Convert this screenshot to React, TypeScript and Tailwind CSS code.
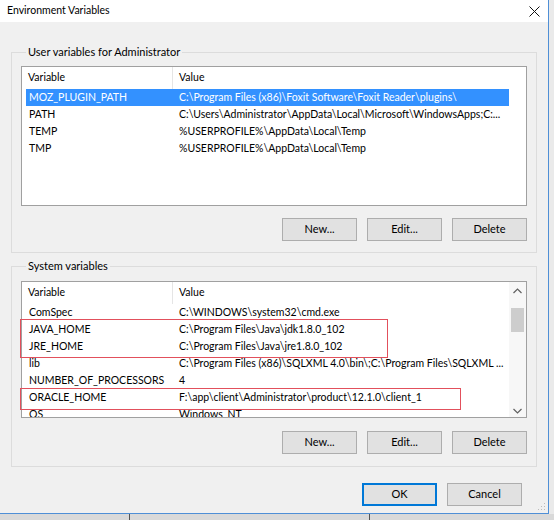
import type { ReactNode } from "react";

type Row = [string, string];

const userVars: Row[] = [
  ["MOZ_PLUGIN_PATH", "C:\\Program Files (x86)\\Foxit Software\\Foxit Reader\\plugins\\"],
  ["PATH", "C:\\Users\\Administrator\\AppData\\Local\\Microsoft\\WindowsApps;C:..."],
  ["TEMP", "%USERPROFILE%\\AppData\\Local\\Temp"],
  ["TMP", "%USERPROFILE%\\AppData\\Local\\Temp"],
];

const systemVars: Row[] = [
  ["ComSpec", "C:\\WINDOWS\\system32\\cmd.exe"],
  ["JAVA_HOME", "C:\\Program Files\\Java\\jdk1.8.0_102"],
  ["JRE_HOME", "C:\\Program Files\\Java\\jre1.8.0_102"],
  ["lib", "C:\\Program Files (x86)\\SQLXML 4.0\\bin\\;C:\\Program Files\\SQLXML ..."],
  ["NUMBER_OF_PROCESSORS", "4"],
  ["ORACLE_HOME", "F:\\app\\client\\Administrator\\product\\12.1.0\\client_1"],
  ["OS", "Windows_NT"],
];

function Button({ label, primary }: { label: string; primary?: boolean }) {
  return (
    <button
      type="button"
      className={
        "h-[23px] w-[75px] shrink-0 bg-[#e1e1e1] text-[11px] text-black " +
        (primary
          ? "border border-[#0078d7] shadow-[inset_0_0_0_1px_#0078d7]"
          : "border border-[#adadad]")
      }
    >
      {label}
    </button>
  );
}

function VarList({
  rows,
  selected,
  height,
  scrollbar,
  children,
}: {
  rows: Row[];
  selected?: number;
  height: string;
  scrollbar?: boolean;
  children?: ReactNode;
}) {
  return (
    <div className={"relative flex border border-[#a0a0a0] bg-white " + height}>
      <div className="min-w-0 flex-1 overflow-hidden pl-[4px]">
        <div className="flex h-[22px] items-center">
          <div className="w-[146px] shrink-0 pl-[2px]">Variable</div>
          <div className="h-full w-px shrink-0 bg-[#e5e5e5]" />
          <div className="pl-[6px]">Value</div>
        </div>
        {rows.map(([name, value], i) => (
          <div
            key={name}
            className={
              "flex h-[17px] w-[483px] items-center whitespace-nowrap " +
              (i === selected ? "bg-[#3391ff] text-white" : "")
            }
          >
            <div className="w-[146px] shrink-0 pl-[3px]">{name}</div>
            <div className="shrink-0 pl-[7px]">{value}</div>
          </div>
        ))}
      </div>
      {scrollbar && (
        <div className="flex w-[17px] shrink-0 flex-col items-center bg-[#f7f7f7] pt-[4px] pb-[3px]">
          <svg width="9" height="6" viewBox="0 0 9 6" className="mt-[2px]">
            <path d="M0.5 5 L4.5 1 L8.5 5" fill="none" stroke="#606060" strokeWidth="1.2" />
          </svg>
          <div className="mt-[14px] h-[24px] w-[13px] bg-[#cdcdcd]" />
          <div className="flex-1" />
          <svg width="9" height="6" viewBox="0 0 9 6">
            <path d="M0.5 1 L4.5 5 L8.5 1" fill="none" stroke="#606060" strokeWidth="1.2" />
          </svg>
        </div>
      )}
      {children}
    </div>
  );
}

function GroupBox({ title, children, className }: { title: string; children: ReactNode; className?: string }) {
  return (
    <fieldset className={"border border-[#dcdcdc] px-[9px] " + (className ?? "")}>
      <legend className="ml-[5px] px-[2px] text-[11px] leading-[16px]">{title}</legend>
      {children}
    </fieldset>
  );
}

export default function App() {
  return (
    <div
      className="relative h-[520px] w-[554px] overflow-hidden bg-[#d9d9d9] text-[10.5px] text-black"
      style={{ fontFamily: 'Lato, "Noto Sans", sans-serif' }}
    >
      <div className="flex h-[514px]">
        <div className="flex w-[549px] flex-col border-r border-b border-[#4f8fd6]">
          {/* title bar */}
          <div className="flex h-[22px] items-center justify-between bg-white pl-[7px] pr-[8px]">
            <span className="text-[10.5px]">Environment Variables</span>
            <svg width="11" height="11" viewBox="0 0 11 11">
              <path d="M0.5 0.5 L10.5 10.5 M10.5 0.5 L0.5 10.5" stroke="#111" strokeWidth="1" />
            </svg>
          </div>

          <div className="relative flex flex-1 flex-col bg-[#f0f0f0] pl-[11px] pr-[11px]">
            <GroupBox title="User variables for Administrator" className="mt-[22px] pt-[6px] pb-[11px]">
              <VarList rows={userVars} selected={0} height="h-[140px]" />
              <div className="mt-[12px] flex justify-end gap-[10px]">
                <Button label="New..." />
                <Button label="Edit..." />
                <Button label="Delete" />
              </div>
            </GroupBox>

            <GroupBox title="System variables" className="mt-[5px] pt-[7px] pb-[12px]">
              <VarList rows={systemVars} height="h-[137px]" scrollbar>
                <div className="absolute left-[-2px] top-[37px] h-[39px] w-[368px] border border-[#e2505c]" />
                <div className="absolute left-[-2px] top-[106px] h-[22px] w-[441px] border border-[#e2505c]" />
              </VarList>
              <div className="mt-[13px] flex justify-end gap-[10px]">
                <Button label="New..." />
                <Button label="Edit..." />
                <Button label="Delete" />
              </div>
            </GroupBox>

            <div className="mt-[16px] flex justify-end gap-[10px] pr-[15px]">
              <Button label="OK" primary />
              <Button label="Cancel" />
            </div>

            {/* resize grip */}
            <svg width="10" height="10" viewBox="0 0 10 10" className="absolute bottom-[2px] right-[2px]">
              <rect x="8" y="2" width="1" height="1" fill="#bbb" />
              <rect x="5" y="5" width="1" height="1" fill="#bbb" />
              <rect x="8" y="5" width="1" height="1" fill="#bbb" />
              <rect x="2" y="8" width="1" height="1" fill="#bbb" />
              <rect x="5" y="8" width="1" height="1" fill="#bbb" />
              <rect x="8" y="8" width="1" height="1" fill="#bbb" />
            </svg>
          </div>
        </div>
        <div className="flex-1 bg-[#eaeaea]" />
      </div>
      <div className="flex h-[6px]">
        <div className="w-[129px]" />
        <div className="w-px bg-[#555]" />
        <div className="w-[239px]" />
        <div className="w-px bg-[#555]" />
      </div>
    </div>
  );
}
